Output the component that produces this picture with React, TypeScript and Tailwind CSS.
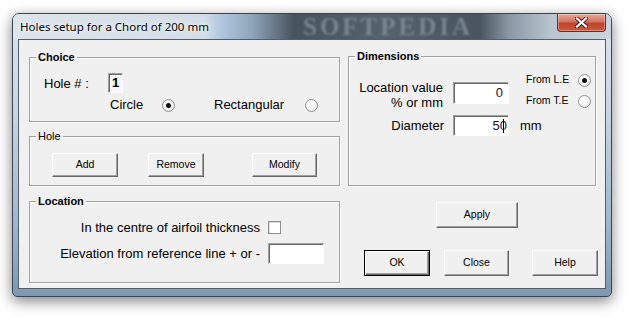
import React from "react";

type BoxProps = {
  title: string;
  bold?: boolean;
  className?: string;
  children?: React.ReactNode;
};

function GroupBox({ title, bold, className, children }: BoxProps) {
  return (
    <div className={`relative border border-[#a0a0a0] shadow-[inset_1px_1px_0_#fff,1px_1px_0_#fff] ${className ?? ""}`}>
      <span
        className={`absolute -top-[8px] left-[6px] bg-[#f0f0f0] px-[2px] text-[11px] leading-[14px] ${
          bold ? "font-bold" : ""
        }`}
      >
        {title}
      </span>
      {children}
    </div>
  );
}

function Radio({ checked }: { checked?: boolean }) {
  return (
    <span className="flex h-[13px] w-[13px] shrink-0 items-center justify-center rounded-full border border-[#8e8f8f] bg-[radial-gradient(circle_at_35%_35%,#ffffff_30%,#dedede)]">
      {checked && <span className="h-[5px] w-[5px] rounded-full bg-[#111]" />}
    </span>
  );
}

function Button({ label, className, isDefault }: { label: string; className?: string; isDefault?: boolean }) {
  const frame = isDefault
    ? "border border-black shadow-[inset_1px_1px_0_#fff,inset_-1px_-1px_0_#696969,inset_-2px_-2px_0_#a0a0a0]"
    : "border border-t-white border-l-white border-r-[#696969] border-b-[#696969] shadow-[inset_-1px_-1px_0_#a0a0a0]";
  return (
    <button className={`flex shrink-0 items-center justify-center bg-[#f0f0f0] text-[10.5px] text-black ${frame} ${className ?? ""}`}>
      {label}
    </button>
  );
}

function TextBox({ className, children }: { className?: string; children?: React.ReactNode }) {
  return (
    <div
      className={`flex shrink-0 items-center border border-t-[#a0a0a0] border-l-[#a0a0a0] border-b-white border-r-white shadow-[inset_1px_1px_0_#696969] text-[13px] ${className ?? ""}`}
    >
      {children}
    </div>
  );
}

export default function App() {
  return (
    <div className="h-[317px] w-[632px] overflow-hidden bg-white pl-[12px] pt-[13px] [font-family:'Liberation_Sans',Arial,sans-serif] text-black">
      {/* window */}
      <div className="flex h-[284px] w-[600px] flex-col rounded-t-[7px] rounded-b-[5px] border border-[#3b4652] bg-[linear-gradient(180deg,#dde5ed_0%,#c8d5e1_35%,#9fb5c9_75%,#7d98b0_100%)] shadow-[0_4px_14px_rgba(0,0,0,0.5)]">
        {/* title bar */}
        <div className="relative flex h-[25px] items-start overflow-hidden rounded-t-[6px] bg-[linear-gradient(90deg,#dde4eb_0%,#d3dde7_32%,#aec6de_35%,#8ea5ba_40%,#47535e_47%,#55616c_62%,#49545f_78%,#8a98a5_83%,#b9c4cf_90%,#cbd4dd_100%)]">
          {/* blurred watermark behind the glass */}
          <span className="pointer-events-none absolute left-[290px] top-[1px] font-['Liberation_Serif'] text-[25px] font-bold leading-[24px] tracking-[3px] text-[#8794a0] opacity-75 blur-[0.8px]">
            SOFTPEDIA
          </span>
          <span className="relative z-10 mt-[5px] pl-[7px] font-['Noto_Sans'] text-[11.5px] leading-[16px] text-black [text-shadow:0_0_6px_#fff,0_0_3px_#fff]">
            Holes setup for a Chord of 200 mm
          </span>
          <div className="relative z-10 ml-auto mr-[5px] flex h-[18px] w-[49px] items-center justify-center rounded-b-[4px] border border-t-0 border-[#6b2a20] bg-[linear-gradient(180deg,#e8a899_0%,#d4735f_45%,#c0432d_55%,#c9573e_100%)] shadow-[inset_0_0_0_1px_rgba(255,255,255,0.35)]">
            <svg width="13" height="11" viewBox="0 0 13 11">
              <path d="M2 1.5 L11 9.5 M11 1.5 L2 9.5" stroke="#4a1a12" strokeWidth="4" strokeLinecap="square" />
              <path d="M2 1.5 L11 9.5 M11 1.5 L2 9.5" stroke="#ffffff" strokeWidth="2.2" strokeLinecap="square" />
            </svg>
          </div>
        </div>

        {/* client area */}
        <div className="mx-[5px] flex h-[250px] border border-[#4f5f6e] bg-[#f0f0f0] pl-[10px] pt-[17px]">
          {/* left column */}
          <div className="flex w-[311px] shrink-0 flex-col">
            <GroupBox title="Choice" bold className="h-[65px] pt-[15px]">
              <div className="flex items-center pl-[14px]">
                <span className="w-[64px] text-[13px] leading-[15px]">Hole # :</span>
                <TextBox className="h-[20px] w-[15px] justify-center bg-[#f7f7f7] font-bold">1</TextBox>
              </div>
              <div className="mt-[5px] flex h-[14px] items-center pl-[80px] text-[13px]">
                <span className="w-[52px]">Circle</span>
                <Radio checked />
                <span className="ml-[39px] w-[91px]">Rectangular</span>
                <Radio />
              </div>
            </GroupBox>

            <GroupBox title="Hole" className="mt-[14px] h-[50px] pt-[16px]">
              <div className="flex pl-[22px]">
                <Button label="Add" className="h-[24px] w-[66px]" />
                <Button label="Remove" className="ml-[30px] h-[24px] w-[56px]" />
                <Button label="Modify" className="ml-[48px] h-[24px] w-[65px]" />
              </div>
            </GroupBox>

            <GroupBox title="Location" bold className="mt-[15px] h-[82px] pt-[19px] text-[13px]">
              <div className="flex h-[13px] items-center">
                <span className="w-[230px] text-right">In the centre of airfoil thickness</span>
                <span className="ml-[8px] h-[13px] w-[13px] border border-[#8e8f8f] bg-white shadow-[inset_1px_1px_0_#dcdcdc]" />
              </div>
              <div className="mt-[9px] flex h-[21px] items-center">
                <span className="w-[230px] text-right">Elevation from reference line + or -</span>
                <TextBox className="ml-[8px] h-[21px] w-[56px] bg-white" />
              </div>
            </GroupBox>
          </div>

          {/* right column */}
          <div className="ml-[8px] flex w-[250px] shrink-0 flex-col">
            <GroupBox title="Dimensions" bold className="-mt-[1px] h-[130px] w-[248px] pt-[16px] text-[13px]">
              <div className="flex items-start">
                <div className="mt-[7px] w-[94px] text-right leading-[15px]">
                  <div>Location value</div>
                  <div>% or mm</div>
                </div>
                <TextBox className="ml-[10px] mt-[9px] h-[22px] w-[56px] justify-end bg-white pr-[5px] text-[#3a0a1e]">0</TextBox>
                <div className="ml-[17px] flex flex-col text-[10.5px]">
                  <div className="flex h-[14px] items-center">
                    <span className="w-[52px]">From L.E</span>
                    <Radio checked />
                  </div>
                  <div className="mt-[7px] flex h-[14px] items-center">
                    <span className="w-[52px]">From T.E</span>
                    <Radio />
                  </div>
                </div>
              </div>
              <div className="mt-[5px] flex h-[21px] items-center">
                <span className="w-[95px] text-right">Diameter</span>
                <TextBox className="ml-[9px] h-[21px] w-[56px] justify-end bg-white pr-[4px] text-[#1c0a3a]">
                  50
                  <span className="-ml-[4px] h-[14px] w-[1px] bg-black" />
                </TextBox>
                <span className="ml-[11px]">mm</span>
              </div>
            </GroupBox>

            <Button label="Apply" className="ml-[88px] mt-[16px] h-[26px] w-[82px]" />

            <div className="mt-[22px] flex">
              <Button label="OK" isDefault className="ml-[16px] h-[26px] w-[66px]" />
              <Button label="Close" className="ml-[14px] h-[26px] w-[65px]" />
              <Button label="Help" className="ml-[23px] h-[26px] w-[66px]" />
            </div>
          </div>
        </div>
      </div>
    </div>
  );
}
